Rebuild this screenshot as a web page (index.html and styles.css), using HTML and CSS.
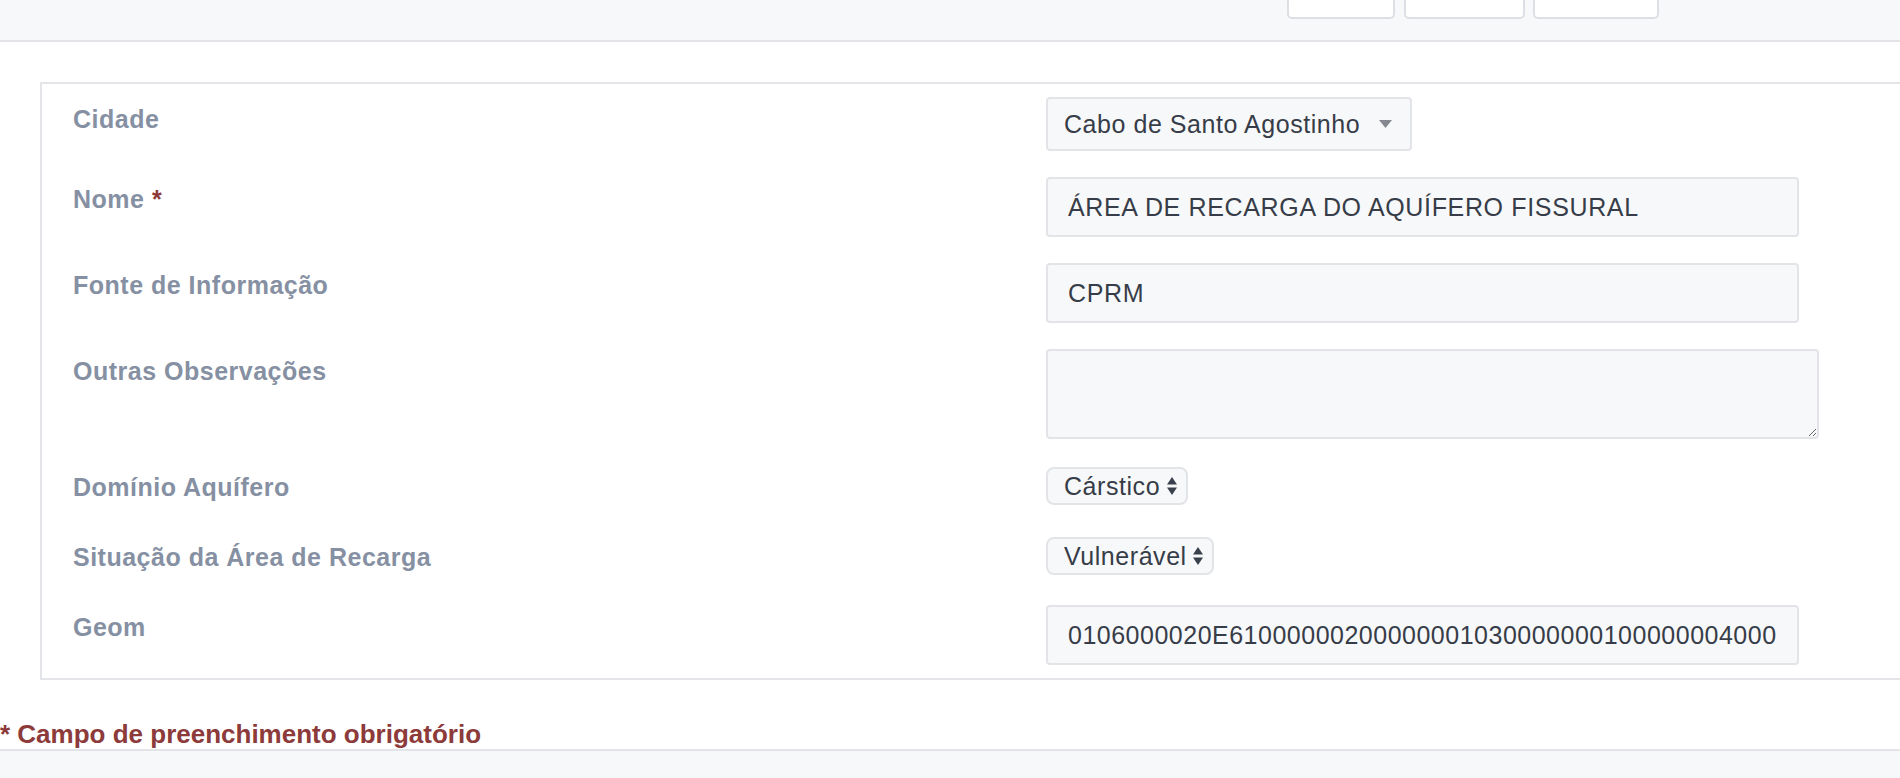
FILE: index.html
```html
<!DOCTYPE html>
<html lang="pt-BR">
<head>
<meta charset="utf-8">
<title>Área de Recarga</title>
<link rel="stylesheet" href="styles.css">
</head>
<body>
<header class="topbar">
  <div class="tabs">
    <span class="tab tab-a"></span>
    <span class="tab tab-b"></span>
    <span class="tab tab-c"></span>
  </div>
</header>
<main class="content">
  <form class="panel">
    <div class="row">
      <label class="label">Cidade</label>
      <div class="control">
        <span class="combo">
          <select class="combo-select"><option>Cabo de Santo Agostinho</option></select>
          <svg class="combo-arrow" width="13" height="8" viewBox="0 0 13 8"><path d="M0 0H13L6.5 8Z" fill="#85898f"/></svg>
        </span>
      </div>
    </div>
    <div class="row">
      <label class="label">Nome <span class="req">*</span></label>
      <div class="control"><input class="field" type="text" value="ÁREA DE RECARGA DO AQUÍFERO FISSURAL"></div>
    </div>
    <div class="row">
      <label class="label">Fonte de Informação</label>
      <div class="control"><input class="field" type="text" value="CPRM"></div>
    </div>
    <div class="row">
      <label class="label">Outras Observações</label>
      <div class="control"><textarea class="area"></textarea></div>
    </div>
    <div class="row">
      <label class="label">Domínio Aquífero</label>
      <div class="control">
        <span class="native">
          <select class="native-select"><option>Cárstico</option></select>
          <svg class="updown" width="10" height="18" viewBox="0 0 10 18"><path d="M0 7.5L5 0L10 7.5Z M0 10.5H10L5 18Z" fill="#3b414c"/></svg>
        </span>
      </div>
    </div>
    <div class="row">
      <label class="label">Situação da Área de Recarga</label>
      <div class="control">
        <span class="native">
          <select class="native-select"><option>Vulnerável</option></select>
          <svg class="updown" width="10" height="18" viewBox="0 0 10 18"><path d="M0 7.5L5 0L10 7.5Z M0 10.5H10L5 18Z" fill="#3b414c"/></svg>
        </span>
      </div>
    </div>
    <div class="row">
      <label class="label">Geom</label>
      <div class="control"><input class="field field-geom" type="text" value="0106000020E61000000200000001030000000100000004000"></div>
    </div>
  </form>
  <p class="note">* Campo de preenchimento obrigatório</p>
</main>
<footer class="footer"></footer>
</body>
</html>
```

FILE: styles.css
```css
* { box-sizing: border-box; }

html, body {
  margin: 0;
  padding: 0;
  height: 778px;
  overflow: hidden;
  background: #ffffff;
  font-family: "Liberation Sans", Arial, sans-serif;
}

.topbar {
  height: 42px;
  background: #f7f8fa;
  border-bottom: 2px solid #e2e4e7;
  display: flex;
  justify-content: flex-end;
  padding-right: 241px;
  overflow: hidden;
}

.tabs {
  display: flex;
  align-items: flex-start;
}

.tab {
  display: block;
  height: 29px;
  margin-top: -10px;
  background: #ffffff;
  border: 2px solid #dcdfe3;
  border-radius: 0 0 5px 5px;
}

.tab-a { width: 108px; }
.tab-b { width: 121px; margin-left: 9px; }
.tab-c { width: 126px; margin-left: 8px; }

.content {
  padding: 40px 0 0 0;
}

.panel {
  margin: 0 -20px 0 40px;
  border: 2px solid #e3e5e8;
  padding: 13px 0 13px 31px;
  display: flex;
  flex-direction: column;
  gap: 26px;
}

.row {
  display: grid;
  grid-template-columns: 973px 1fr;
  align-items: start;
}

.label {
  font-size: 25px;
  font-weight: bold;
  letter-spacing: 0.5px;
  line-height: 44px;
  color: #8690a3;
}

.req { color: #8c3a3a; }

.control {
  display: flex;
  align-items: flex-start;
}

.combo {
  display: flex;
  align-items: center;
  width: 366px;
  height: 54px;
  background: #f7f8fa;
  border: 2px solid #e2e4e8;
  border-radius: 4px;
  padding: 0 18px 0 16px;
}

.combo-select {
  flex: 1;
  appearance: none;
  -webkit-appearance: none;
  border: 0;
  background: transparent;
  padding: 0;
  margin: 0;
  font-family: "Liberation Sans", Arial, sans-serif;
  font-size: 25px;
  letter-spacing: 0.55px;
  color: #373d48;
  outline: none;
}

.combo-arrow { flex: none; }

.field {
  width: 753px;
  height: 60px;
  background: #f7f8fa;
  border: 2px solid #e2e4e8;
  border-radius: 4px;
  padding: 0 18px 0 20px;
  font-family: "Liberation Sans", Arial, sans-serif;
  font-size: 25px;
  letter-spacing: 0.65px;
  color: #373d48;
  outline: none;
}

.field-geom {
  letter-spacing: 0.5px;
}

.area {
  display: block;
  width: 773px;
  height: 90px;
  background: #f7f8fa;
  border: 2px solid #e2e4e8;
  border-radius: 4px;
  padding: 10px 20px;
  font-family: "Liberation Sans", Arial, sans-serif;
  font-size: 25px;
  color: #373d48;
  resize: both;
  outline: none;
}

.native {
  display: inline-flex;
  align-items: center;
  height: 38px;
  margin-top: 2px;
  background: #f7f8fa;
  border: 2px solid #e2e4e8;
  border-radius: 8px;
  padding: 0 9px 0 16px;
  gap: 6px;
}

.native-select {
  appearance: none;
  -webkit-appearance: none;
  border: 0;
  background: transparent;
  padding: 0;
  margin: 0;
  font-family: "Liberation Sans", Arial, sans-serif;
  font-size: 25px;
  letter-spacing: 0.55px;
  color: #373d48;
  outline: none;
}

.updown { flex: none; }

.note {
  margin: 39px 0 0 0;
  font-size: 26px;
  font-weight: bold;
  line-height: 30px;
  color: #8c3a3a;
}

.footer {
  height: 40px;
  background: #f7f8fa;
  border-top: 2px solid #e2e4e7;
}
```
